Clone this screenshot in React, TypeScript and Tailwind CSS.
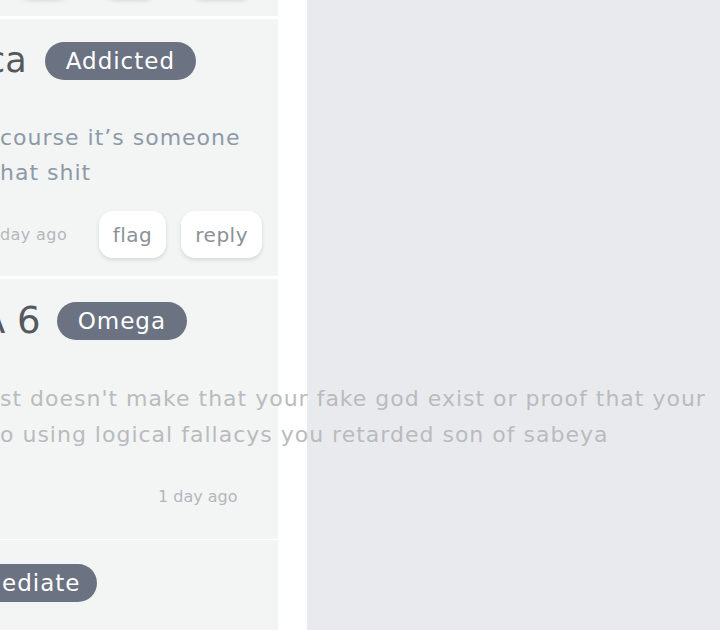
import React from "react";

const font = { fontFamily: '"DejaVu Sans", sans-serif' };

function Badge({ label }: { label: string }) {
  return (
    <span className="inline-flex h-[38px] items-center rounded-full bg-[#6b7282] px-[21px] text-[23px] leading-none tracking-[1px] text-white">
      {label}
    </span>
  );
}

function ActionButton({ label }: { label: string }) {
  return (
    <button className="flex h-[47px] items-center rounded-[14px] bg-white px-[14px] text-[20px] tracking-[0.5px] text-[#8b9197] shadow-[0_2px_4px_rgba(0,0,0,0.12)]">
      {label}
    </button>
  );
}

export default function App() {
  return (
    <div
      className="flex h-[630px] w-[720px] overflow-hidden bg-[#e9eaee]"
      style={font}
    >
      <div className="flex w-[307px] shrink-0 flex-col bg-white">
        <div className="flex w-[278px] flex-col">
          {/* previous comment, scrolled almost out of view */}
          <div className="h-[16px] overflow-hidden bg-[#f3f5f5]">
            <div className="mt-[-48px] flex gap-[33px] pl-[18px]">
              <div className="h-[47px] w-[52px] rounded-[14px] bg-white shadow-[0_2px_4px_rgba(0,0,0,0.12)]" />
              <div className="h-[47px] w-[54px] rounded-[14px] bg-white shadow-[0_2px_4px_rgba(0,0,0,0.12)]" />
              <div className="h-[47px] w-[63px] rounded-[14px] bg-white shadow-[0_2px_4px_rgba(0,0,0,0.12)]" />
            </div>
          </div>

          {/* comment 1 */}
          <div className="mt-[3px] bg-[#f3f5f5] pb-[18px] pr-[16px] pt-[23px]">
            <div className="ml-[-14px] flex h-[38px] items-center gap-[18px]">
              <span className="mt-[-2px] text-[35px] leading-none text-[#55595e]">ca</span>
              <Badge label="Addicted" />
            </div>
            <p className="mt-[40px] whitespace-nowrap text-[22px] leading-[35px] tracking-[1px] text-[#8d9aa6]">
              course it’s someone
              <br />
              hat shit
            </p>
            <div className="mt-[21px] flex h-[47px] items-center justify-between">
              <span className="text-[16px] tracking-[0.4px] text-[#b3b7bb]">day ago</span>
              <div className="flex gap-[15px]">
                <ActionButton label="flag" />
                <ActionButton label="reply" />
              </div>
            </div>
          </div>

          {/* comment 2 */}
          <div className="mt-[3px] bg-[#f3f5f5] pb-[19px] pt-[23px]">
            <div className="ml-[-20px] flex h-[38px] items-center gap-[16px]">
              <span className="mt-[-2px] text-[37px] leading-none text-[#55595e]">A 6</span>
              <Badge label="Omega" />
            </div>
            <p className="mt-[41px] whitespace-nowrap text-[22px] leading-[36px] tracking-[1px] text-[#b9bbbe]">
              st doesn't make that your fake god exist or proof that your
              <br />
              o using logical fallacys you retarded son of sabeya
            </p>
            <div className="mt-[20px] flex h-[47px] items-center pl-[158px]">
              <span className="text-[16px] text-[#b3b7bb]">1 day ago</span>
            </div>
          </div>

          {/* comment 3 */}
          <div className="mt-[1px] h-[100px] bg-[#f3f5f5] pt-[24px]">
            <span className="inline-flex h-[38px] items-center rounded-r-full bg-[#6b7282] pl-[2px] pr-[17px] text-[23px] leading-none tracking-[1px] text-white">
              ediate
            </span>
          </div>
        </div>
      </div>
    </div>
  );
}
